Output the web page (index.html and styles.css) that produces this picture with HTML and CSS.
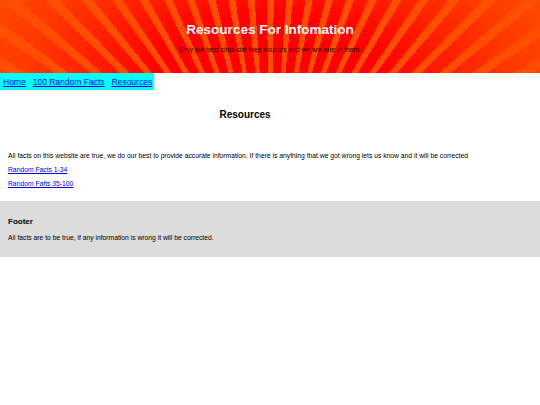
FILE: index.html
```html
<!DOCTYPE html>
<html lang="en">
<head>
<meta charset="utf-8">
<title>Resources For Infomation</title>
<link rel="stylesheet" href="styles.css">
</head>
<body>
<header class="banner">
  <h1 class="banner-title">Resources For Infomation</h1>
  <p class="banner-sub">Only the best sites site their sources and we are one of them.</p>
</header>
<nav class="nav">
  <a href="#" class="nav-link">Home</a>
  <a href="#" class="nav-link">100 Random Facts</a>
  <a href="#" class="nav-link">Resources</a>
</nav>
<main class="content">
  <h2 class="page-title">Resources</h2>
  <p class="intro">All facts on this website are true, we do our best to provide accurate information. If there is anything that we got wrong lets us know and it will be corrected</p>
  <p class="res"><a href="#" class="res-link">Random Facts 1-34</a></p>
  <p class="res"><a href="#" class="res-link">Random Fafts 35-100</a></p>
</main>
<footer class="footer">
  <h3 class="footer-title">Footer</h3>
  <p class="footer-text">All facts are to be true, if any information is wrong it will be corrected.</p>
</footer>
</body>
</html>
```

FILE: styles.css
```css
html, body {
  margin: 0;
  padding: 0;
  background: #ffffff;
  font-family: "Liberation Sans", Arial, sans-serif;
  color: #000;
}

.banner {
  height: 73px;
  box-sizing: border-box;
  padding-top: 21px;
  text-align: center;
  background:
    radial-gradient(ellipse 55% 220% at 50% 100%, rgba(255,40,0,0) 35%, rgba(255,78,0,0.7) 80%, rgba(255,80,0,0.9) 100%),
    repeating-conic-gradient(from 1deg at 50% 300%, #ff0000 0deg 3.2deg, #ff4d00 3.2deg 5deg);
}

.banner-title {
  margin: 0;
  font-size: 13.5px;
  line-height: 18px;
  font-weight: bold;
  color: #ffffff;
}

.banner-sub {
  margin: 7px 0 0;
  font-size: 6.7px;
  line-height: 8px;
  color: #1a0000;
}

.nav {
  display: flex;
  width: 154px;
  height: 17px;
  box-sizing: border-box;
  align-items: center;
  gap: 7px;
  padding-left: 3px;
  background: #00ffff;
}

.nav-link {
  font-size: 8.5px;
  color: #0000ee;
  text-decoration: underline;
}

.content {
  padding: 0 8px 8px;
}

.page-title {
  margin: 18px 50px 0 0;
  text-align: center;
  font-size: 10px;
  line-height: 14px;
  font-weight: bold;
}

.intro {
  margin: 29px 0 0;
  font-size: 6.75px;
  line-height: 9px;
}

.res {
  margin: 5px 0 0;
  font-size: 6.75px;
  line-height: 9px;
}

.res-link {
  color: #0000ee;
}

.footer {
  margin-top: 5px;
  height: 56px;
  box-sizing: border-box;
  padding: 15px 8px 0;
  background: #dcdcdc;
}

.footer-title {
  margin: 0;
  font-size: 8px;
  line-height: 11px;
  font-weight: bold;
}

.footer-text {
  margin: 6px 0 0;
  font-size: 6.75px;
  line-height: 9px;
}
```
